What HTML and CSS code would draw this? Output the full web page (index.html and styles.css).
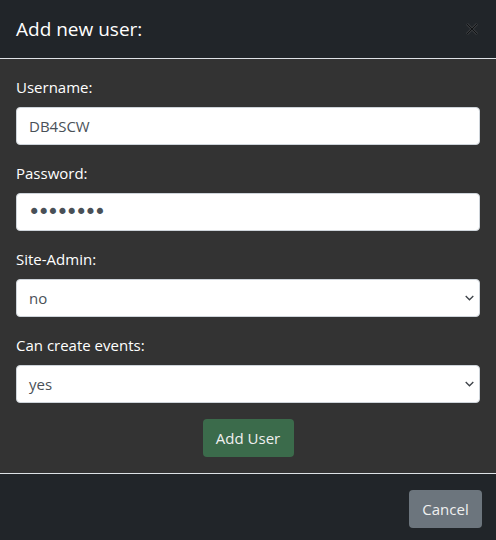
FILE: index.html
```html
<!DOCTYPE html>
<html>
<head>
<meta charset="utf-8">
<link rel="stylesheet" href="styles.css">
</head>
<body>
<div class="modal">
  <div class="modal-header">
    <h5 class="modal-title">Add new user:</h5>
    <button class="btn-close" type="button" aria-label="Close">
      <svg width="12" height="12" viewBox="0 0 12 12"><path d="M1 1L11 11M11 1L1 11" stroke="#55585c" stroke-width="2.4" fill="none"/><path d="M1 1L11 11M11 1L1 11" stroke="#101214" stroke-width="1.2" fill="none"/></svg>
    </button>
  </div>
  <div class="modal-body">
    <div class="group">
      <label class="label">Username:</label>
      <input class="control" type="text" value="DB4SCW">
    </div>
    <div class="group">
      <label class="label">Password:</label>
      <input class="control password" type="password" value="12345678">
    </div>
    <div class="group">
      <label class="label">Site-Admin:</label>
      <div class="control select"><span>no</span><svg width="9" height="6" viewBox="0 0 9 6"><path d="M0.7 1L4.5 4.8L8.3 1" stroke="#3d4248" stroke-width="1.3" fill="none"/></svg></div>
    </div>
    <div class="group">
      <label class="label">Can create events:</label>
      <div class="control select"><span>yes</span><svg width="9" height="6" viewBox="0 0 9 6"><path d="M0.7 1L4.5 4.8L8.3 1" stroke="#3d4248" stroke-width="1.3" fill="none"/></svg></div>
    </div>
    <div class="actions">
      <button class="btn btn-success" type="button">Add User</button>
    </div>
  </div>
  <div class="modal-footer">
    <button class="btn btn-secondary" type="button">Cancel</button>
  </div>
</div>
</body>
</html>
```
FILE: styles.css
```css
html, body {
  margin: 0;
  padding: 0;
  background: #212529;
}
body {
  font-family: "Open Sans", "Noto Sans", sans-serif;
  font-size: 15px;
  width: 496px;
  height: 540px;
  overflow: hidden;
}
.modal {
  display: flex;
  flex-direction: column;
}
.modal-header {
  background: #212529;
  height: 59px;
  box-sizing: border-box;
  padding: 0 16px;
  display: flex;
  align-items: center;
  justify-content: space-between;
  border-bottom: 1px solid #dee2e6;
}
.modal-title {
  margin: 0;
  font-size: 19px;
  font-weight: 400;
  color: #ffffff;
  line-height: 24px;
}
.btn-close {
  background: none;
  border: 0;
  padding: 0;
  margin-right: 2px;
  width: 12px;
  height: 12px;
  display: flex;
  align-items: center;
  justify-content: center;
}
.modal-body {
  background: #333333;
  padding: 16px;
  display: flex;
  flex-direction: column;
  border-bottom: 1px solid #dee2e6;
}
.group {
  display: flex;
  flex-direction: column;
  margin-bottom: 16px;
}
.label {
  color: #ffffff;
  line-height: 24px;
  margin-bottom: 8px;
}
.control {
  box-sizing: border-box;
  height: 38px;
  width: 100%;
  background: #ffffff;
  border: 1px solid #ced4da;
  border-radius: 4px;
  padding: 0 12px;
  font-family: inherit;
  font-size: 15px;
  color: #495057;
  outline: none;
  margin: 0;
}
.password {
  font-family: "DejaVu Sans", sans-serif;
  font-size: 21px;
  letter-spacing: -3px;
  padding-left: 11px;
}
.select {
  display: flex;
  align-items: center;
  justify-content: space-between;
  padding-right: 5px;
}
.actions {
  display: flex;
  justify-content: center;
}
.btn {
  height: 38px;
  border: 0;
  border-radius: 4px;
  padding: 0 12px;
  font-family: inherit;
  font-size: 15px;
  color: #f0f0f0;
}
.btn-success {
  background: #3b6b4b;
  width: 91px;
}
.btn-secondary {
  background: #6c757d;
  width: 73px;
}
.modal-footer {
  background: #212529;
  padding: 16px 14px 16px 16px;
  display: flex;
  justify-content: flex-end;
  height: 66px;
  box-sizing: border-box;
}
```
